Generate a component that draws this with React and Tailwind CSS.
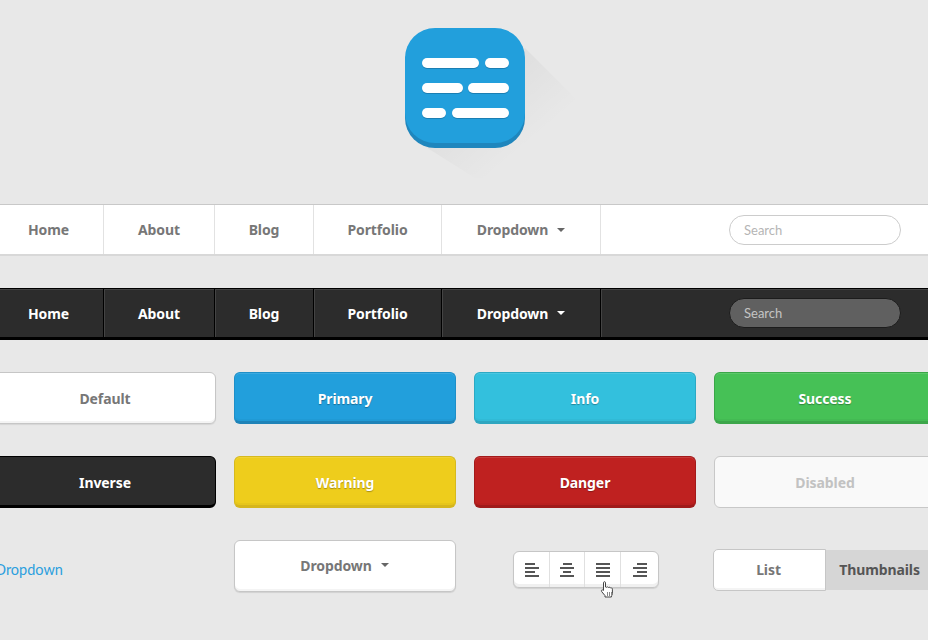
const navItems = [
  { label: "Home", width: "w-[110px]" },
  { label: "About", width: "w-[111px]" },
  { label: "Blog", width: "w-[99px]" },
  { label: "Portfolio", width: "w-[128px]" },
  { label: "Dropdown", width: "w-[159px]", caret: true },
];

const colored = "border-b-[3px] pt-[2px] text-white [text-shadow:0_1px_1px_rgba(0,0,0,0.3)] shadow-[inset_0_1px_0_rgba(255,255,255,0.12),inset_0_-2px_0_rgba(0,0,0,0.03)]";

const buttons = [
  { label: "Default", cls: "bg-white border-[#c6c6c6] shadow-[0_1px_1px_rgba(0,0,0,0.08),inset_0_-2px_0_#f4f4f4] text-[#777777]" },
  { label: "Primary", cls: `bg-[#229fdc] border-[#1f8fc8] border-b-[#1e83b8] ${colored}` },
  { label: "Info", cls: `bg-[#33c0dd] border-[#2ca9c4] border-b-[#2ea6c0] ${colored}` },
  { label: "Success", cls: `bg-[#46c156] border-[#3aa648] border-b-[#3ca64a] ${colored}` },
  { label: "Inverse", cls: "bg-[#2c2c2c] border-black border-b-black border-b-[3px] pt-[2px] text-white" },
  { label: "Warning", cls: `bg-[#eecd1c] border-[#d6b91e] border-b-[#d6b61c] ${colored}` },
  { label: "Danger", cls: `bg-[#bf2120] border-[#a31a1a] border-b-[#a01a1a] ${colored}` },
  { label: "Disabled", cls: "bg-[#f9f9f9] border-[#c8c8c8] text-[#c2c2c2]" },
];

const alignGroups = [
  { width: "w-[36px]", rows: [[0, 10], [0, 14], [0, 10], [0, 14]] },
  { width: "w-[35px]", rows: [[3, 9], [0, 14], [3, 8], [0, 14]] },
  { width: "w-[36px]", rows: [[0, 14], [0, 14], [0, 14], [0, 14]] },
  { width: "flex-1", rows: [[4, 10], [0, 14], [4, 10], [0, 14]] },
];

function Logo() {
  return (
    <svg width="170" height="150" viewBox="0 0 170 150" className="block">
      <defs>
        <linearGradient id="longShadow" x1="0.35" y1="0.35" x2="0.72" y2="0.72">
          <stop offset="0" stopColor="#000000" stopOpacity="0.04" />
          <stop offset="1" stopColor="#000000" stopOpacity="0" />
        </linearGradient>
      </defs>
      <path d="M120 20 L170 70 L170 150 L70 150 L16 116 Z" fill="url(#longShadow)" />
      <rect x="0" y="5" width="120" height="115" rx="30" fill="#1f86bd" />
      <rect x="0" y="0" width="120" height="115" rx="30" fill="#229fdc" />
      {[
        [17, 30, 57],
        [80, 30, 24],
        [17, 55, 41],
        [63, 55, 41],
        [17, 80, 24],
        [47, 80, 57],
      ].map(([x, y, w]) => (
        <g key={`${x}-${y}`}>
          <rect x={x} y={y + 1} width={w} height="10" rx="5" fill="#1b7fb3" />
          <rect x={x} y={y} width={w} height="10" rx="5" fill="#ffffff" />
        </g>
      ))}
    </svg>
  );
}

function Caret({ className }) {
  return <span className={`ml-[9px] inline-block h-0 w-0 border-x-[4px] border-t-[4px] border-x-transparent align-[3px] ${className}`} />;
}

function Navbar({ dark }) {
  return (
    <div
      className={
        dark
          ? "mt-[32px] -ml-[6px] flex h-[52px] w-[940px] items-stretch border-t border-b-[3px] border-t-black border-b-black bg-[#2c2c2c] shadow-[inset_0_1px_0_#444444]"
          : "-ml-[6px] flex h-[52px] w-[940px] items-stretch border-t border-b-2 border-t-[#c8c8c8] border-b-[#d8d8d8] bg-white"
      }
    >
      {navItems.map((item) => (
        <div
          key={item.label}
          className={`flex items-center justify-center text-[14px] font-bold tracking-[-0.1px] ${item.width} ${
            dark ? "border-r border-r-black text-white shadow-[1px_0_0_#444444]" : "border-r border-r-[#e2e2e2] text-[#777777]"
          }`}
        >
          {item.label}
          {item.caret && <Caret className={dark ? "border-t-white" : "border-t-[#666666]"} />}
        </div>
      ))}
      <div className="flex flex-1 items-center pl-[128px]">
        <div
          className={`flex w-[172px] items-center rounded-full border pl-[14px] pt-[2px] font-['Lato'] text-[13px] ${
            dark ? "h-[30px] border-[#1c1c1c] bg-[#606060] text-[#c4c4c4]" : "h-[30px] border-[#cccccc] bg-white text-[#b5b5b5]"
          }`}
        >
          Search
        </div>
      </div>
    </div>
  );
}

function AlignIcon({ rows }) {
  return (
    <svg width="14" height="14" viewBox="0 0 14 14" fill="#555555">
      {rows.map(([x, w], i) => (
        <rect key={i} x={x} y={i * 4} width={w} height="2" />
      ))}
    </svg>
  );
}

function HandCursor() {
  return (
    <svg width="14" height="18" viewBox="0 0 14 18" className="absolute left-[86px] top-[29px]">
      <path
        d="M3.500 1.500c0-1 2-1 2 0V6l1 .3c.6-.7 1.600-.5 2 .2.6-.5 1.500-.3 1.900.4.9-.3 2 .2 2 1.300v4.300c0 1-.4 1.700-1 2.500v1H5v-1.400L1.600 10.500c-.8-1.200.6-2.200 1.900-1.100Z"
        fill="#ffffff"
        stroke="#444444"
        strokeWidth="1"
      />
      <path d="M7 11h1v4H7zM9 11h1v4H9zM11 11h1v4h-1z" fill="#888888" />
    </svg>
  );
}

export default function App() {
  return (
    <div className="h-[640px] w-[928px] overflow-hidden bg-[#e8e8e8] font-['Noto_Sans',sans-serif]">
      <div className="h-[204px] pt-[28px] pl-[405px]">
        <Logo />
      </div>

      <Navbar />
      <Navbar dark />

      <div className="mt-[32px] -ml-[6px] grid w-[942px] grid-cols-[222px_222px_222px_222px] gap-x-[18px] gap-y-[32px]">
        {buttons.map((b) => (
          <div key={b.label} className={`flex h-[52px] items-center justify-center rounded-[6px] border text-[14px] font-bold tracking-[-0.1px] ${b.cls}`}>
            {b.label}
          </div>
        ))}

        <div className="flex h-[52px] items-center pl-[1px] pt-[8px] font-['Lato'] text-[14.5px] text-[#2c9fde]">
          Dropdown
        </div>
        <div className="flex h-[52px] items-center justify-center rounded-[6px] border border-[#c6c6c6] bg-white pb-[2px] pr-[1px] text-[14px] font-bold tracking-[-0.1px] text-[#777777] shadow-[0_1px_1px_rgba(0,0,0,0.1),inset_0_-2px_0_#f4f4f4]">
          Dropdown
          <Caret className="border-t-[#666666]" />
        </div>
        <div className="flex h-[52px] items-start pl-[39px] pt-[11px]">
          <div className="relative flex h-[37px] w-[146px] rounded-[6px] border border-[#c6c6c6] bg-white shadow-[0_1px_1px_rgba(0,0,0,0.1),inset_0_-3px_0_#f0f0f0]">
            {alignGroups.map((group, i) => (
              <div key={i} className={`flex items-center justify-center ${group.width} ${i < 3 ? "border-r border-r-[#e0e0e0]" : ""}`}>
                <AlignIcon rows={group.rows} />
              </div>
            ))}
            <HandCursor />
          </div>
        </div>
        <div className="-ml-[1px] flex h-[52px] items-start pt-[9px]">
          <div className="flex h-[42px] w-[113px] items-center justify-center rounded-l-[5px] border border-[#c6c6c6] bg-white pb-[2px] pr-[2px] text-[14px] font-bold tracking-[-0.1px] text-[#777777] shadow-[inset_0_-2px_0_#f4f4f4]">
            List
          </div>
          <div className="mt-[1px] flex h-[40px] flex-1 items-center justify-center bg-[#d6d6d6] pb-[1px] pr-[3px] text-[14px] font-bold tracking-[-0.1px] text-[#555555]">
            Thumbnails
          </div>
        </div>
      </div>
    </div>
  );
}
